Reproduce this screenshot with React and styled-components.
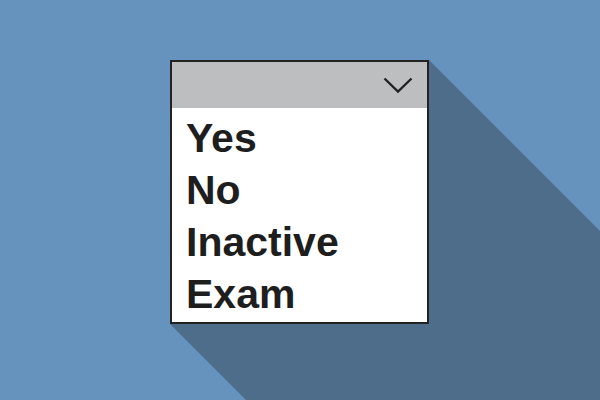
import React from "react";
import styled, { createGlobalStyle } from "styled-components";

const Global = createGlobalStyle`
  html, body { margin: 0; padding: 0; }
  body { background: #6693be; font-family: "Liberation Sans", Arial, sans-serif; }
`;

const Stage = styled.div`
  position: relative;
  width: 600px;
  height: 400px;
  overflow: hidden;
  background: #6693be;
  display: flex;
  flex-direction: column;
  align-items: flex-start;
  padding: 60px 0 0 170px;
  box-sizing: border-box;
`;

const Shadow = styled.svg`
  position: absolute;
  left: 0;
  top: 0;
  width: 600px;
  height: 400px;
`;

const Select = styled.div`
  position: relative;
  z-index: 1;
  width: 259px;
  height: 264px;
  box-sizing: border-box;
  border: 2px solid #222222;
  background: #ffffff;
  display: flex;
  flex-direction: column;
`;

const Header = styled.div`
  height: 46px;
  background: #bdbec0;
  display: flex;
  align-items: center;
  justify-content: flex-end;
  padding-right: 14px;
`;

const List = styled.ul`
  list-style: none;
  margin: 0;
  padding: 4px 0 0 14px;
`;

const Option = styled.li`
  font-family: "Liberation Sans", Arial, sans-serif;
  font-weight: 700;
  font-size: 41px;
  line-height: 52px;
  color: #1e1e1e;
`;

const Chevron = () => (
  <svg width="30" height="18" viewBox="0 0 30 18">
    <polyline points="1.5,2.5 15,15.5 28.5,2.5" fill="none" stroke="#222" strokeWidth="2.4" />
  </svg>
);

export default function App() {
  const options = ["Yes", "No", "Inactive", "Exam"];
  return (
    <Stage>
      <Global />
      <Shadow viewBox="0 0 600 400">
        <polygon points="429,60 1029,660 770,924 170,324" fill="#4e6d8b" />
      </Shadow>
      <Select>
        <Header>
          <Chevron />
        </Header>
        <List>
          {options.map((o) => (
            <Option key={o}>{o}</Option>
          ))}
        </List>
      </Select>
    </Stage>
  );
}
